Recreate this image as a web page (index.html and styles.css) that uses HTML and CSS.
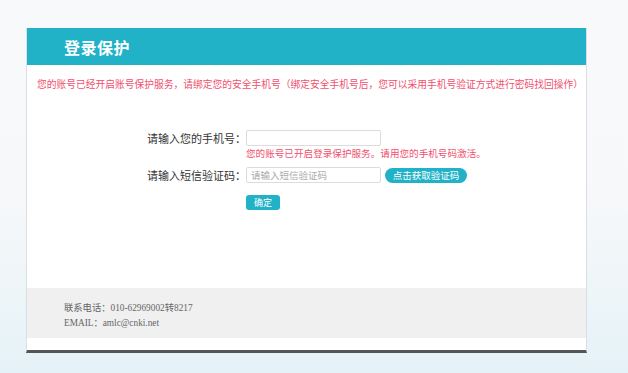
FILE: index.html
```html
<!DOCTYPE html>
<html lang="zh-CN">
<head>
  <meta charset="UTF-8">
  <title>登录保护</title>
  <link rel="stylesheet" href="styles.css">
</head>
<body>
  <div class="box">
    <div class="box-head">
      <h2>登录保护</h2>
    </div>

    <div class="box-main">
      <p class="notice">您的账号已经开启账号保护服务，请绑定您的安全手机号（绑定安全手机号后，您可以采用手机号验证方式进行密码找回操作）</p>

      <div class="form">
        <div class="row">
          <label class="label">请输入您的手机号：</label>
          <input class="field" type="text">
        </div>
        <div class="row tip-row">
          <span class="label"></span>
          <span class="tip">您的账号已开启登录保护服务。请用您的手机号码激活。</span>
        </div>
        <div class="row code-row">
          <label class="label">请输入短信验证码：</label>
          <input class="field" type="text" placeholder="请输入短信验证码">
          <button class="btn-code" type="button">点击获取验证码</button>
        </div>
        <div class="row ok-row">
          <span class="label"></span>
          <button class="btn-ok" type="button">确定</button>
        </div>
      </div>
    </div>

    <div class="box-foot">
      <p>联系电话：010-62969002转8217</p>
      <p>EMAIL：amlc@cnki.net</p>
    </div>
  </div>
</body>
</html>
```

FILE: styles.css
```css
html, body {
  margin: 0;
  padding: 0;
}

body {
  font-family: "Noto Sans CJK SC", "Noto Sans", sans-serif;
  color: #333;
  height: 373px;
  background: linear-gradient(to bottom, #f8f9fb 0%, #f6f8fa 55%, #e5f2f7 100%);
  padding-top: 28px;
  box-sizing: border-box;
}

.box {
  width: 559px;
  margin-left: 26px;
  background: #fff;
  border: 1px solid #dcdfe2;
  border-top: none;
  border-bottom: 3px solid #555;
}

/* header bar */
.box-head {
  height: 37px;
  background: #21b2c8;
  padding-left: 37px;
  display: flex;
  align-items: center;
}

.box-head h2 {
  margin: 0;
  color: #fff;
  font-size: 16px;
  font-weight: bold;
  letter-spacing: 0.5px;
}

.box-main {
  height: 223px;
  padding-top: 12px;
  box-sizing: border-box;
}

.notice {
  margin: 0 0 0 10px;
  color: #f0506e;
  font-size: 9.75px;
  line-height: 14px;
  white-space: nowrap;
}

.form {
  margin-top: 39px;
}

.row {
  display: flex;
  align-items: center;
}

.label {
  width: 219px;
  text-align: right;
  font-size: 11px;
  color: #333;
  flex-shrink: 0;
}

.field {
  width: 135px;
  height: 16px;
  box-sizing: border-box;
  border: 1px solid #dcdcdc;
  border-radius: 2px;
  padding: 0 4px;
  font-family: inherit;
  font-size: 9.5px;
  color: #333;
  outline: none;
}

.field::placeholder {
  color: #aaa;
}

.tip-row {
  height: 12px;
  margin-top: 1px;
}

.tip {
  color: #f0506e;
  font-size: 9.6px;
  line-height: 12px;
  white-space: nowrap;
}

.code-row {
  margin-top: 8px;
}

.btn-code {
  margin-left: 4px;
  width: 82px;
  height: 15px;
  border: none;
  border-radius: 8px;
  background: #21b2c8;
  color: #fff;
  font-family: inherit;
  font-size: 9.5px;
  padding: 0;
  line-height: 15px;
}

.ok-row {
  margin-top: 12px;
}

.btn-ok {
  width: 34px;
  height: 15px;
  border: none;
  border-radius: 3px;
  background: #21b2c8;
  color: #fff;
  font-family: inherit;
  font-size: 9px;
  padding: 0;
  line-height: 15px;
}

/* footer */
.box-foot {
  background: #f0f0f0;
  height: 50px;
  box-sizing: border-box;
  padding: 13px 0 0 37px;
  margin-bottom: 12px;
  font-family: "Liberation Serif", "Noto Sans CJK SC", serif;
  font-size: 9.3px;
  color: #666;
}

.box-foot p {
  margin: 0;
  line-height: 15px;
}
```
